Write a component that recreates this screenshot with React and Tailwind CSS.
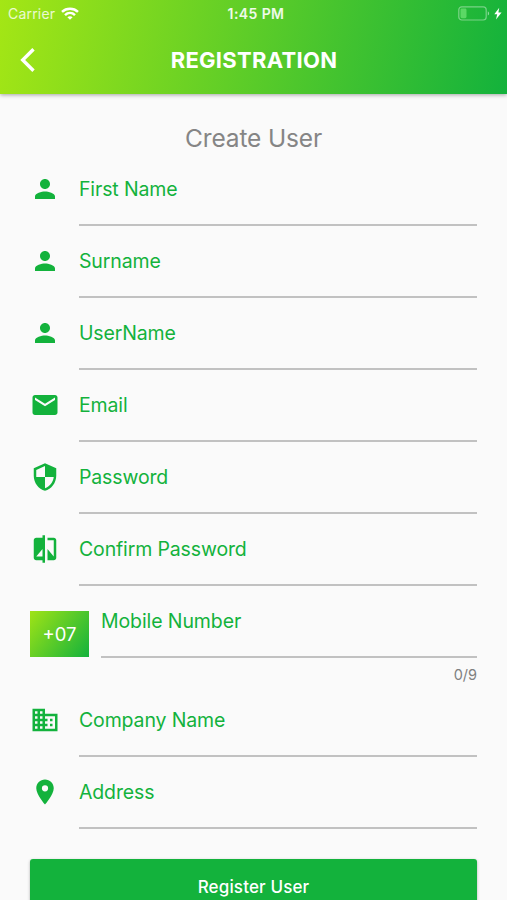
// Registration.jsx
import React from 'react';
import { MdPerson, MdEmail, MdSecurity, MdCompare, MdBusiness, MdLocationOn } from 'react-icons/md';

const accountFields = [
  { label: 'First Name', icon: MdPerson },
  { label: 'Surname', icon: MdPerson },
  { label: 'UserName', icon: MdPerson },
  { label: 'Email', icon: MdEmail },
  { label: 'Password', icon: MdSecurity },
  { label: 'Confirm Password', icon: MdCompare },
];

const companyFields = [
  { label: 'Company Name', icon: MdBusiness },
  { label: 'Address', icon: MdLocationOn },
];

const StatusBar = () => (
  <div className="grid h-7 grid-cols-3 items-center pl-2 pr-[5px] text-[14px]">
    <div className="flex items-center gap-[6px] text-white/80">
      <span className="-mt-[2px] tracking-[0.2px]">Carrier</span>
      <svg className="-mt-[2px] h-[13px] w-[18px]" viewBox="0 0 18 13" fill="none" stroke="white" strokeWidth="2.5">
        <path d="M1 4.8C5.5.6 12.5.6 17 4.8" />
        <path d="M4 8.1c2.9-2.7 7.1-2.7 10 0" />
        <path d="M6.4 10.2c1.5-1.4 3.7-1.4 5.2 0L9 12.8z" fill="white" stroke="none" />
      </svg>
    </div>
    <div className="-mt-[2px] pl-[2px] text-center text-[14px] font-semibold tracking-[0.4px] text-white/90">1:45 PM</div>
    <div className="flex items-center justify-end gap-1">
      <svg className="-mt-[2px] h-[15px] w-8" viewBox="0 0 32 15" fill="none">
        <rect x="0.8" y="0.8" width="27.4" height="13.2" rx="3" stroke="white" strokeOpacity="0.4" strokeWidth="1.2" />
        <rect x="2.5" y="2.6" width="6" height="9.6" rx="1.4" fill="#5bd865" />
        <path d="M29.8 5.2c1.8.7 1.8 3.7 0 4.4z" fill="white" fillOpacity="0.5" />
      </svg>
      <svg className="-mt-[2px] h-[13px] w-2" viewBox="0 0 8 13" fill="white">
        <path d="M5.2.8.3 7.3h2.9L2 12.5l5.6-7H4.4z" />
      </svg>
    </div>
  </div>
);

const Field = ({ label, icon: Icon }) => (
  <div className="flex h-[72px]">
    <div className="flex w-[49px] items-center pb-[2px]">
      <Icon size={30} />
    </div>
    <div className="flex flex-1 items-center border-b-2 border-[#c1c1c1] pt-[1px] text-[19.5px] tracking-[-0.14px]">
      {label}
    </div>
  </div>
);

const Registration = () => {
  return (
    <div className="h-[900px] w-full overflow-hidden bg-[#fafafa] font-[Inter,sans-serif] text-[#13b23c]">
      <header className="relative h-[94px] bg-linear-[100.5deg] from-[#a4e615] to-[#13b23c] text-white shadow-[0_1px_4px_rgba(0,0,0,0.35)]">
        <StatusBar />
        <div className="grid h-16 grid-cols-[60px_1fr_60px] items-center">
          <svg className="ml-5 h-6 w-4" viewBox="0 0 16 24" fill="none" stroke="white" strokeWidth="3.4">
            <path d="M13.5 1.2 2.7 12l10.8 10.8" />
          </svg>
          <h1 className="pl-[1px] text-center text-[22px] font-bold tracking-[0.3px]">REGISTRATION</h1>
        </div>
      </header>

      <main className="px-[30px]">
        <h2 className="flex h-[60px] items-end justify-center pb-[1px] text-[24.5px] leading-[30px] tracking-[-0.15px] text-[#858585]">Create User</h2>

        {accountFields.map(field => (
          <Field key={field.label} {...field} />
        ))}

        <div className="flex h-[72px] items-end gap-3">
          <div className="mb-[1px] flex h-[46px] w-[59px] items-center justify-center bg-linear-[128deg] from-[#a0e316] to-[#13b23c] pt-[1px] text-[18.5px] text-white">
            +07
          </div>
          <div className="flex h-full flex-1 items-center border-b-2 border-[#c1c1c1] pt-[1px] text-[19.5px] tracking-[-0.1px]">
            Mobile Number
          </div>
        </div>
        <div className="flex h-[27px] items-center justify-end pt-[6px] text-[14.5px] text-[#808080]">0/9</div>

        {companyFields.map(field => (
          <Field key={field.label} {...field} />
        ))}

        <button className="mt-[30px] flex h-[57px] w-full items-center justify-center rounded-[3px] bg-[#13b23c] text-[17px] font-medium tracking-[0.15px] text-white shadow-[0_1px_3px_rgba(0,0,0,0.3)]">
          Register User
        </button>
      </main>
    </div>
  );
};

export default Registration;
